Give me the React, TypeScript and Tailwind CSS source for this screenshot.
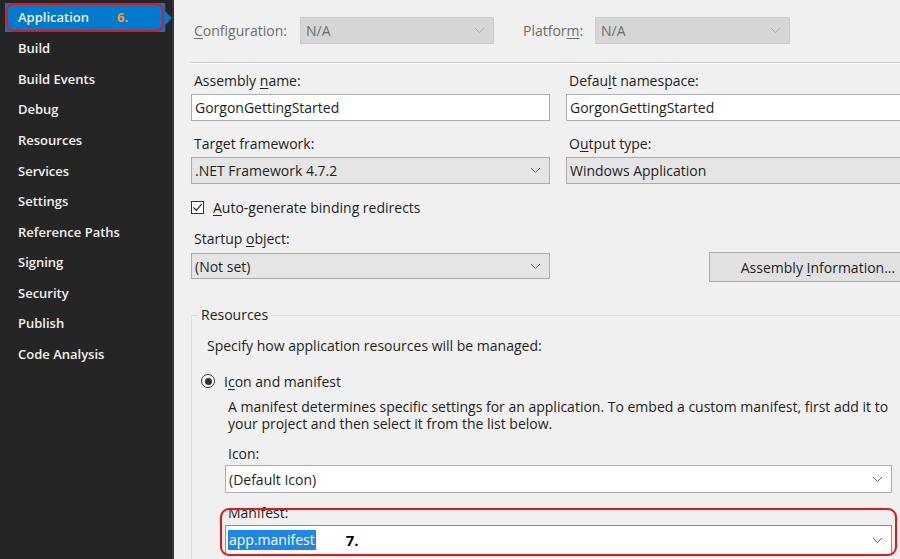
import React from "react";

const FONT = { fontFamily: '"Open Sans", "Noto Sans", sans-serif' };

// small chevron used by every combo box
const Chevron = ({ color = "#6a6a6a" }: { color?: string }) => (
  <svg width="11" height="7" viewBox="0 0 11 7" className="shrink-0">
    <path d="M1 1 L5.5 5.5 L10 1" fill="none" stroke={color} strokeWidth="1" />
  </svg>
);

const navItems = [
  "Build",
  "Build Events",
  "Debug",
  "Resources",
  "Services",
  "Settings",
  "Reference Paths",
  "Signing",
  "Security",
  "Publish",
  "Code Analysis",
];

// Label with an underlined access key
const Label = ({ pre, key_, post, className = "" }: { pre: string; key_?: string; post?: string; className?: string }) => (
  <div className={"h-[22px] leading-[22px] pl-[3px] text-[#1e1e1e] " + className}>
    {pre}
    {key_ && <span className="underline underline-offset-2">{key_}</span>}
    {post}
  </div>
);

const TextBox = ({ value }: { value: string }) => (
  <div className="mt-[2px] h-[27px] bg-white border border-[#abadb3] pl-[3px] flex items-center text-[#1e1e1e]">
    {value}
  </div>
);

const Combo = ({ value, className = "" }: { value: string; className?: string }) => (
  <div className={"bg-[#e5e5e5] border border-[#acacac] pl-[3px] pr-[8px] flex items-center justify-between text-[#1e1e1e] " + className}>
    <span>{value}</span>
    <Chevron />
  </div>
);

const Sidebar = () => (
  <div className="w-[174px] shrink-0 h-full bg-[#252526] border-r-2 border-[#333337] pt-[3px] font-semibold text-[13px] text-[#f1f1f1]">
    {/* selected page */}
    <div className="relative ml-[5px] w-[160px] h-[29px] bg-[#007acc] flex items-center pl-[13px] mb-[1.6px]">
      <span>Application</span>
      <span className="ml-[28px] font-bold text-[#ff9a3c]">6.</span>
      <div className="absolute right-[-7px] top-[7.5px] w-0 h-0 border-y-[7px] border-y-transparent border-l-[7px] border-l-[#007acc]" />
      <div className="absolute left-[1px] right-[1px] top-0 bottom-0 border-2 border-[#e8141c] rounded-[8px]" />
    </div>
    {navItems.map((item) => (
      <div key={item} className="h-[30.6px] flex items-center pl-[18px]">
        {item}
      </div>
    ))}
  </div>
);

export default function App() {
  return (
    <div className="w-[900px] h-[559px] flex overflow-hidden bg-[#f0f0f0]" style={FONT}>
      <Sidebar />
      <div className="flex-1 min-w-0 overflow-hidden pl-[17px] text-[14px]">
        {/* configuration / platform */}
        <div className="pt-[17px] flex items-center">
          <div className="w-[109px] pl-[3px] text-[#6d6d6d]">
            <span className="underline underline-offset-2">C</span>onfiguration:
          </div>
          <div className="w-[194px] h-[27px] bg-[#d6d6d6] border border-[#cccccc] pl-[5px] pr-[8px] flex items-center justify-between text-[#6d6d6d]">
            <span>N/A</span>
            <Chevron color="#a8a8a8" />
          </div>
          <div className="ml-[29px] w-[72px] text-[#6d6d6d]">
            Platfor<span className="underline underline-offset-2">m</span>:
          </div>
          <div className="w-[195px] h-[27px] bg-[#d6d6d6] border border-[#cccccc] pl-[5px] pr-[8px] flex items-center justify-between text-[#6d6d6d]">
            <span>N/A</span>
            <Chevron color="#a8a8a8" />
          </div>
        </div>

        <div className="mt-[18px] border-t border-[#c8c8c8] border-b border-b-white" />

        {/* two columns */}
        <div className="flex gap-x-[16px] mt-[6px]">
          <div className="w-[359px] shrink-0">
            <Label pre="Assembly " key_="n" post="ame:" />
            <TextBox value="GorgonGettingStarted" />
            <Label pre="Tar" key_="g" post="et framework:" className="mt-[12px]" />
            <Combo value=".NET Framework 4.7.2" className="mt-[2px] h-[27px]" />
            <div className="mt-[12px] h-[22px] flex items-center text-[#1e1e1e]">
              <div className="w-[13px] h-[13px] bg-white border border-[#333333] flex items-center justify-center">
                <svg width="11" height="11" viewBox="0 0 11 11">
                  <path d="M1.5 5.5 L4.3 8.3 L9.6 2.2" fill="none" stroke="#222" strokeWidth="1.2" />
                </svg>
              </div>
              <span className="ml-[9px]">
                <span className="underline underline-offset-2">A</span>uto-generate binding redirects
              </span>
            </div>
            <Label pre="Startup " key_="o" post="bject:" className="mt-[10px]" />
            <Combo value="(Not set)" className="mt-[3px] h-[26px]" />
          </div>
          <div className="w-[359px] shrink-0">
            <Label pre="Defau" key_="l" post="t namespace:" />
            <TextBox value="GorgonGettingStarted" />
            <Label pre="O" key_="u" post="tput type:" className="mt-[12px]" />
            <div className="mt-[2px] h-[27px] bg-[#e5e5e5] border border-[#acacac] pl-[3px] flex items-center text-[#1e1e1e]">
              Windows Application
            </div>
            <div className="mt-[68px] ml-[143px] w-[218px] h-[30px] bg-[#e1e1e1] border border-[#adadad] flex items-center justify-center text-[#1e1e1e]">
              <span>
                Assembly <span className="underline underline-offset-2">I</span>nformation...
              </span>
            </div>
          </div>
        </div>

        {/* resources group */}
        <fieldset className="mt-[22px] w-[734px] border border-[#dcdcdc] text-[#1e1e1e]">
          <legend className="ml-[6px] px-[3px] h-[22px] leading-[22px]">Resources</legend>
          <div className="mt-[10px] ml-[15px] h-[20px] leading-[20px]">
            Specify how application resources will be managed:
          </div>
          <div className="mt-[15px] ml-[9px] h-[20px] flex items-center">
            <div className="w-[14px] h-[14px] rounded-full bg-white border border-[#333333] flex items-center justify-center">
              <div className="w-[7px] h-[7px] rounded-full bg-[#333333]" />
            </div>
            <span className="ml-[9px]">
              I<span className="underline underline-offset-2">c</span>on and manifest
            </span>
          </div>
          <div className="mt-[7px] ml-[36px] mr-[10px] whitespace-nowrap">
            <div className="h-[17px] leading-[17px]">
              A manifest determines specific settings for an application. To embed a custom manifest, first add it to
            </div>
            <div className="h-[17px] leading-[17px]">your project and then select it from the list below.</div>
          </div>
          <div className="mt-[12px] ml-[36px] h-[20px] leading-[20px]">Icon:</div>
          <div className="mt-[1px] ml-[33px] mr-[32px] h-[28px] bg-white border border-[#abadb3] pl-[3px] pr-[8px] flex items-center justify-between">
            <span>(Default Icon)</span>
            <Chevron />
          </div>
          <div className="relative mt-[10px] ml-[33px] mr-[32px] mb-[20px]">
            <div className="ml-[3px] h-[20px] leading-[20px]">Manifest:</div>
            <div className="mt-[2px] h-[30px] bg-white border border-[#4a9ee8] pl-[2px] pr-[8px] flex items-center justify-between">
              <div className="flex items-center">
                <span className="bg-[#1e86e6] text-white px-[1px] leading-[20px]">app.manifest</span>
                <span className="ml-[30px] font-bold text-[15px] text-black">7.</span>
              </div>
              <Chevron />
            </div>
            <div className="absolute top-[5px] left-[-5px] right-[-5px] bottom-[-1px] border-2 border-[#e8141c] rounded-[9px]" />
          </div>
        </fieldset>
      </div>
    </div>
  );
}
